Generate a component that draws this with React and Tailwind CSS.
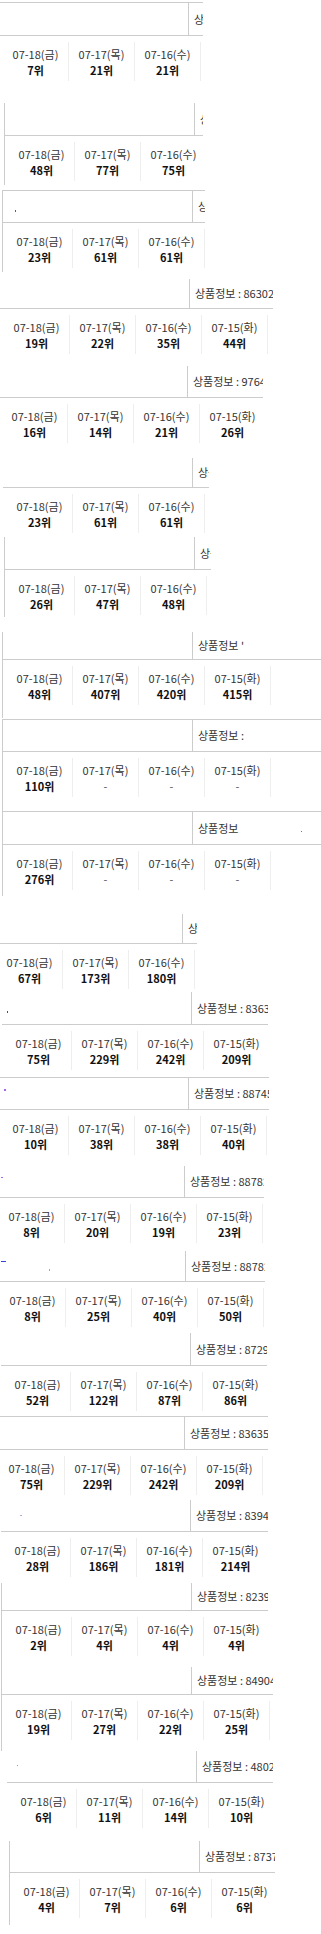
import React from "react";

const DAYS = ["07-18(금)", "07-17(목)", "07-16(수)", "07-15(화)"];

// top = header top row, hb = header bottom border row, b = left border column, clip = visible right edge
const BLOCKS = [
  { top: 2, hb: 35, b: -2, clip: 203, tb: true, label: "상품정보 : 8630215", ranks: ["7", "21", "21", "30"] },
  { top: 103, hb: 135, b: 4, clip: 203, lh: 82, label: "상품정보 : 8630215", ranks: ["48", "77", "75", "70"] },
  { top: 190, hb: 222, b: 2, clip: 205, tb: true, lh: 82, label: "상품정보 : 8630215", ranks: ["23", "61", "61", "60"], dots: [{ x: 15, y: 210, w: 1, h: 2, c: "#4455ee" }] },
  { top: 279, hb: 308, b: -1, clip: 273, label: "상품정보 : 8630215", ranks: ["19", "22", "35", "44"] },
  { top: 366, hb: 397, b: -3, clip: 263, label: "상품정보 : 9764120", ranks: ["16", "14", "21", "26"] },
  { top: 458, hb: 487, b: 2, clip: 209, label: "상품정보 : 8630215", ranks: ["23", "61", "61", "60"] },
  { top: 537, hb: 569, b: 4, clip: 211, lh: 80, label: "상품정보 : 8630215", ranks: ["26", "47", "48", "45"] },
  { top: 632, hb: 659, b: 2, clip: 321, lh: 86, label: "상품정보 '", ranks: ["48", "407", "420", "415"] },
  { top: 719, hb: 751, b: 2, clip: 321, tb: true, lh: 92, label: "상품정보 :", ranks: ["110", "-", "-", "-"] },
  { top: 811, hb: 844, b: 2, clip: 321, tb: true, lh: 85, label: "상품정보", ranks: ["276", "-", "-", "-"], dots: [{ x: 301, y: 831, w: 1, h: 1, c: "#777" }] },
  { top: 914, hb: 943, b: -8, clip: 197, label: "상품정보 : 8630215", ranks: ["67", "173", "180", "170"] },
  { top: 992, hb: 1024, b: 1, clip: 268, label: "상품정보 : 8363012", ranks: ["75", "229", "242", "209"], dots: [{ x: 7, y: 1011, w: 1, h: 2, c: "#3344dd" }] },
  { top: 1077, hb: 1109, b: -2, clip: 269, tb: true, label: "상품정보 : 8874512", ranks: ["10", "38", "38", "40"], dots: [{ x: 4, y: 1089, w: 2, h: 2, c: "#aa66ee" }] },
  { top: 1166, hb: 1197, b: -6, clip: 264, label: "상품정보 : 8878231", ranks: ["8", "20", "19", "23"], dots: [{ x: 1, y: 1177, w: 2, h: 1, c: "#aa66ee" }] },
  { top: 1251, hb: 1281, b: -5, clip: 265, label: "상품정보 : 8878232", ranks: ["8", "25", "40", "50"], dots: [{ x: 1, y: 1261, w: 5, h: 1, c: "#3344dd" }, { x: 49, y: 1269, w: 1, h: 2, c: "#88aadd" }] },
  { top: 1333, hb: 1365, b: 0, clip: 267, label: "상품정보 : 8729415", ranks: ["52", "122", "87", "86"] },
  { top: 1416, hb: 1449, b: -6, clip: 268, tb: true, label: "상품정보 : 8363521", ranks: ["75", "229", "242", "209"] },
  { top: 1500, hb: 1531, b: 0, clip: 268, label: "상품정보 : 8394125", ranks: ["28", "186", "181", "214"], dots: [{ x: 20, y: 1515, w: 2, h: 1, c: "#aab0dd" }] },
  { top: 1583, hb: 1610, b: 1, clip: 268, lh: 84, label: "상품정보 : 8239104", ranks: ["2", "4", "4", "4"] },
  { top: 1667, hb: 1694, b: 1, clip: 273, lh: 84, label: "상품정보 : 8490415", ranks: ["19", "27", "22", "25"] },
  { top: 1751, hb: 1782, b: 6, clip: 273, label: "상품정보 : 4802315", ranks: ["6", "11", "14", "10"], dots: [{ x: 17, y: 1765, w: 1, h: 1, c: "#999" }] },
  { top: 1841, hb: 1872, b: 9, clip: 275, lh: 84, label: "상품정보 : 8737120", ranks: ["4", "7", "6", "6"] },
];

function Block({ d, h }) {
  return (
    <div className="relative overflow-hidden" style={{ marginLeft: d.b, width: d.clip - d.b, height: h }}>
      <div
        className={`w-[340px] border-l ${d.lh ? "border-[#cccccc]" : "border-transparent"}`}
        style={d.lh ? { height: d.lh } : undefined}
      >
        <div
          className={`flex border-b border-[#cccccc] ${d.tb ? "border-t" : ""}`}
          style={{ height: d.hb - d.top + 1 }}
        >
          <div className="w-[189px] shrink-0" />
          <div className="flex-1 flex items-center border-l border-[#cccccc] pl-[5px] text-[11px] text-[#333333] whitespace-nowrap">
            {d.label}
          </div>
        </div>
        <div className="flex pl-[4px] pt-[6px]">
          {DAYS.map((day, i) => (
            <div key={day} className="w-[66px] h-[39px] shrink-0 border-r border-[#eeeeee] pt-[4px] text-center leading-[16px] text-[11px]">
              <div className="text-[#333333]">{day}</div>
              <div className={d.ranks[i] === "-" ? "text-[#555555]" : "font-bold text-[#111111]"}>
                {d.ranks[i] === "-" ? "-" : `${d.ranks[i]}위`}
              </div>
            </div>
          ))}
        </div>
      </div>
      {(d.dots || []).map((p, i) => (
        <span
          key={i}
          className="absolute block"
          style={{ left: p.x - d.b, top: p.y - d.top, width: p.w, height: p.h, background: p.c }}
        />
      ))}
    </div>
  );
}

export default function App() {
  return (
    <div
      className="w-[321px] h-[1934px] overflow-hidden bg-white pt-[2px]"
      style={{ fontFamily: '"Noto Sans CJK KR", "Noto Sans", sans-serif' }}
    >
      {BLOCKS.map((d, i) => {
        const next = i + 1 < BLOCKS.length ? BLOCKS[i + 1].top : 1934;
        return <Block key={i} d={d} h={next - d.top} />;
      })}
    </div>
  );
}
